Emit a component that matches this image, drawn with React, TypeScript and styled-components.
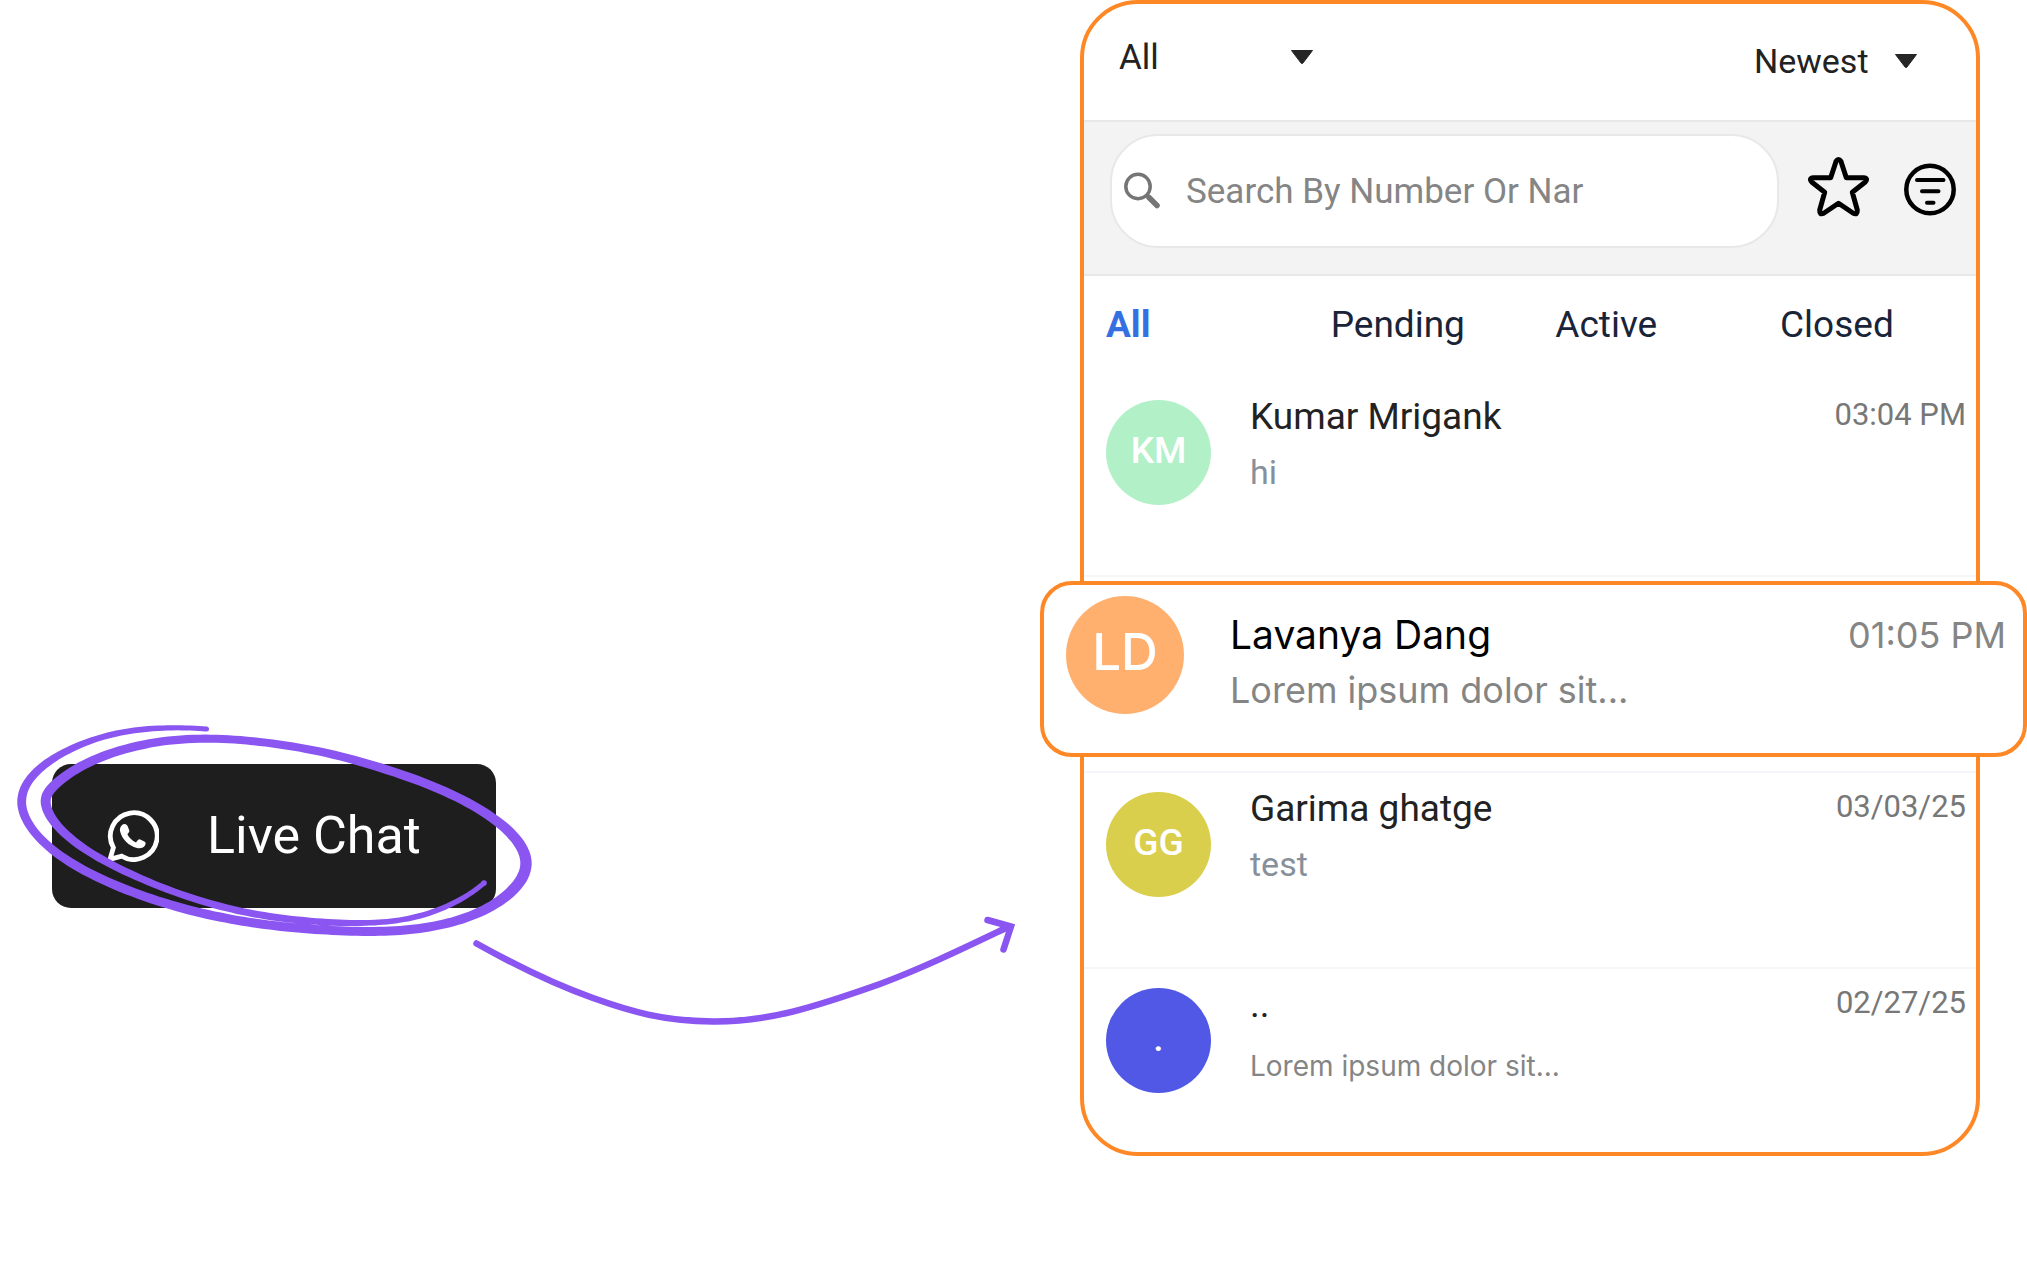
import React, { useState } from "react";
import styled, { createGlobalStyle, css } from "styled-components";

const colors = {
  orange: "#ff8826",
  violet: "#8a55f0",
  ink: "#1e1e1e",
  line: "#e8e8e8",
  muted: "#858585",
};

const roboto = `Roboto, "Liberation Sans", sans-serif`;
const inter = `Inter, "Liberation Sans", sans-serif`;

const GlobalStyle = createGlobalStyle`
  *, *::before, *::after { box-sizing: border-box; }
  body { margin: 0; background: #fff; font-family: ${roboto}; }
  button, input, select { font: inherit; color: inherit; margin: 0; padding: 0; border: 0; background: none; }
  button { cursor: pointer; }
`;

const Page = styled.main`
  display: grid;
  grid-template-columns: minmax(0, 6fr) minmax(0, 5fr);
  align-items: start;
  min-height: 100vh;
  padding-right: 47px;
`;

/* ---------- Left: call to action ---------- */

const Callout = styled.section`
  position: relative;
  padding: 764px 0 0 52px;
`;

const LiveChatButton = styled.button`
  display: flex;
  align-items: center;
  gap: 48px;
  width: 444px;
  height: 144px;
  padding: 0 55px;
  border-radius: 19px;
  background: ${colors.ink};
  color: #fff;
  font-size: 52px;
  line-height: 62px;
  white-space: nowrap;
`;

const Annotation = styled.svg`
  position: absolute;
  top: 0;
  left: 0;
  overflow: visible;
  pointer-events: none;
`;

/* ---------- Right: chat panel ---------- */

const Panel = styled.section`
  border: 4px solid ${colors.orange};
  border-radius: 58px;
  background: #fff;
`;

const Toolbar = styled.div`
  display: flex;
  justify-content: space-between;
  align-items: flex-start;
  height: 116px;
  padding: 0 58px 0 35px;
`;

const Picker = styled.label<{ $width: number; $height: number; $size: number }>`
  display: grid;
  align-items: center;
  width: ${(p) => p.$width}px;
  height: ${(p) => p.$height}px;
  font-size: ${(p) => p.$size}px;
  color: #222;

  & > * {
    grid-area: 1 / 1;
  }
  select {
    appearance: none;
    width: 100%;
    height: 100%;
    outline: none;
  }
  svg {
    justify-self: end;
    pointer-events: none;
  }
`;

const SearchBar = styled.div`
  display: flex;
  align-items: center;
  gap: 22px;
  padding: 12px 9px 26px 26px;
  border-top: 2px solid ${colors.line};
  border-bottom: 2px solid ${colors.line};
  background: #f3f3f3;
`;

const SearchField = styled.label`
  display: flex;
  flex: 1;
  align-items: center;
  gap: 26px;
  min-width: 0;
  height: 114px;
  padding: 0 12px;
  border: 2px solid ${colors.line};
  border-radius: 48px;
  background: #fff;

  svg {
    flex: none;
  }
  input {
    flex: 1;
    min-width: 0;
    height: 100%;
    outline: none;
    font-size: 35px;
    color: #222;
  }
  input::placeholder {
    color: ${colors.muted};
    opacity: 1;
  }
`;

const IconButton = styled.button`
  flex: none;
  width: 72px;
  height: 72px;

  svg {
    display: block;
  }
`;

const Tabs = styled.div`
  display: grid;
  grid-template-columns: repeat(3, minmax(0, 1fr)) 196px;
  height: 96px;
  padding-left: 22px;
`;

const Tab = styled.button<{ $active: boolean }>`
  text-align: left;
  font-size: 37px;
  font-weight: ${(p) => (p.$active ? 700 : 400)};
  color: ${(p) => (p.$active ? "#3570e3" : "#1a2438")};
`;

const ChatList = styled.ul`
  margin: 0;
  padding: 9px 0 0;
  list-style: none;
`;

const ChatItem = styled.li`
  height: 196px;
  border-bottom: 2px solid #f5f6fa;

  &:last-child {
    height: 183px;
    border-bottom: 0;
  }
`;

const Avatar = styled.span<{ $color: string }>`
  display: flex;
  flex: none;
  align-items: center;
  justify-content: center;
  width: 105px;
  height: 105px;
  padding-bottom: 4px;
  border-radius: 50%;
  background: ${(p) => p.$color};
  color: #fff;
  font-size: 37px;
  font-weight: 500;
`;

const Summary = styled.div`
  flex: 1;
  min-width: 0;
`;

const Name = styled.h2`
  margin: 0;
  font-size: 37px;
  font-weight: 400;
  line-height: 34px;
  color: #222;
`;

const Preview = styled.p<{ $light?: boolean }>`
  margin: 18px 0 0;
  font-size: 34px;
  line-height: 40px;
  color: #87909a;
  white-space: nowrap;
  ${(p) =>
    p.$light &&
    css`
      font-family: ${inter};
      font-size: 28px;
      line-height: 52px;
      color: ${colors.muted};
    `}
`;

const Time = styled.time`
  flex: none;
  font-size: 31px;
  line-height: 29px;
  color: #777;
`;

const ChatRow = styled.article<{ $raised?: boolean }>`
  display: flex;
  align-items: flex-start;
  gap: 39px;
  padding: 19px 10px 0 22px;

  ${(p) =>
    p.$raised &&
    css`
      gap: 46px;
      height: 176px;
      margin: 0 -51px 0 -44px;
      padding: 11px 17px 0 22px;
      border: 4px solid ${colors.orange};
      border-radius: 32px;
      background: #fff;
      font-family: ${inter};

      ${Avatar} {
        width: 118px;
        height: 118px;
        padding-bottom: 7px;
        font-size: 51px;
      }
      ${Summary}, ${Time} {
        padding-top: 15px;
      }
      ${Name} {
        font-size: 39px;
        line-height: 48px;
        color: #000;
      }
      ${Preview} {
        margin-top: 7px;
        font-size: 36px;
        line-height: 48px;
        color: ${colors.muted};
      }
      ${Time} {
        font-size: 36px;
        line-height: 48px;
        color: ${colors.muted};
      }
    `}
`;

const RaisedItem = styled(ChatItem)`
  padding-top: 4px;
`;

/* ---------- Drawings ---------- */

type InkPoint = [x: number, y: number, width: number];

const loop: InkPoint[] = [
  [206, 729, 5], [173, 727, 5], [133, 730, 6], [100, 737, 6], [67, 750, 7],
  [40, 767, 8], [25, 785, 8.5], [20.5, 802, 9], [26, 822, 8.5], [47, 847, 8.5],
  [83, 871, 9], [133, 893, 9], [183, 909, 9], [233, 920, 9], [275, 926, 9],
  [320, 930, 9], [370, 932, 9], [410, 930, 9], [448, 924, 9], [485, 911, 9.5],
  [514, 891, 11], [529, 867, 11.5], [521, 844, 11], [499, 821, 9.5],
  [457, 796, 9], [410, 777, 9], [353, 759, 8.5], [300, 747, 8], [245, 740, 8],
  [200, 738, 8], [150, 742, 8.5], [100, 756, 9], [67, 774, 9.5], [48, 791, 10],
  [44.5, 803, 10], [53, 823, 9], [80, 847, 8], [117, 868, 7.5], [167, 890, 7],
  [217, 906, 7], [258, 915, 7], [303, 921, 7], [353, 923.5, 6], [387, 922, 5.5],
  [420, 917, 5.5], [453, 904, 5.5], [473, 892, 5], [484, 883, 5],
];

const spline = (a: number, b: number, c: number, d: number, t: number) =>
  0.5 *
  (2 * b + (c - a) * t + (2 * a - 5 * b + 4 * c - d) * t * t + (3 * b - a - 3 * c + d) * t * t * t);

/** Averages each point with its neighbours, so that the stroke bends evenly. */
function soften(points: InkPoint[], reach: number): InkPoint[] {
  return points.map((_, i) => {
    const r = Math.min(reach, i, points.length - 1 - i);
    const near = points.slice(i - r, i + r + 1);
    return [0, 1, 2].map((k) => near.reduce((sum, p) => sum + p[k], 0) / near.length) as InkPoint;
  });
}

/** Builds the outline of a pen stroke whose width changes along its way. */
function inkOutline(points: InkPoint[]) {
  const sampled: InkPoint[] = [];
  for (let i = 0; i < points.length - 1; i++) {
    const p = [points[Math.max(i - 1, 0)], points[i], points[i + 1], points[Math.min(i + 2, points.length - 1)]];
    for (let s = 0; s < 8; s++) {
      sampled.push([0, 1, 2].map((k) => spline(p[0][k], p[1][k], p[2][k], p[3][k], s / 8)) as InkPoint);
    }
  }
  sampled.push(points[points.length - 1]);
  const path = soften(soften(sampled, 5), 4);
  const left: string[] = [];
  const right: string[] = [];
  path.forEach(([x, y, w], i) => {
    const a = path[Math.max(i - 1, 0)];
    const b = path[Math.min(i + 1, path.length - 1)];
    const len = Math.hypot(b[0] - a[0], b[1] - a[1]) || 1;
    const nx = ((b[1] - a[1]) / len) * (w / 2);
    const ny = (-(b[0] - a[0]) / len) * (w / 2);
    left.push(`${(x + nx).toFixed(1)} ${(y + ny).toFixed(1)}`);
    right.unshift(`${(x - nx).toFixed(1)} ${(y - ny).toFixed(1)}`);
  });
  return `M${left.join("L")}L${right.join("L")}Z`;
}

const Scribble = () => (
  <Annotation width="1030" height="1040" viewBox="0 0 1030 1040" aria-hidden="true">
    <path d={inkOutline(loop)} fill={colors.violet} />
    <circle cx="206.5" cy="729" r="2.5" fill={colors.violet} />
    <circle cx="484" cy="883" r="2.8" fill={colors.violet} />
    <g fill="none" stroke={colors.violet} strokeWidth="6.5" strokeLinecap="round">
      <path d="M476.5 943.5C515 965 553 984 593 998C632 1012 664 1021 713 1021.5C768 1022 815 1007 880 984C925 967 962 949 1006 928" />
      <path d="M987.5 920L1011 926.5L1003.5 949.5" />
    </g>
  </Annotation>
);

const WhatsAppIcon = () => (
  <svg width="52" height="52" viewBox="0 0 52 52" aria-hidden="true">
    <path
      d="M3 49.3L6.4 37.6A23.4 23.4 0 1 1 14.8 46.2Z"
      fill="none"
      stroke="#fff"
      strokeWidth="4.8"
      strokeLinejoin="miter"
    />
    <path
      d="M16.4 14.2C18.4 13.4 20 14.6 20.8 16.6L22.2 20.2C22.6 21.4 22 22.4 20.4 24.2C22.4 28 25 30.6 29 32.4C30.8 30.2 31.8 29 33.2 29.4L37.4 31.4C39 32.2 38.8 33.4 38.2 35C37 37.8 33.4 38.8 30 38C21.4 35.6 15.6 30 13.2 21.8C12.4 18.8 13.6 15.4 16.4 14.2Z"
      fill="#fff"
    />
  </svg>
);

const Caret = () => (
  <svg width="24" height="14" viewBox="0 0 24 14" aria-hidden="true">
    <path d="M1.5 0.5H22.5L13 13Q12 14 11 13Z" fill="#262626" stroke="#262626" strokeLinejoin="round" />
  </svg>
);

const SearchIcon = () => (
  <svg width="36" height="38" viewBox="0 0 36 38" fill="none" stroke="#757575" aria-hidden="true">
    <circle cx="14" cy="14.5" r="12.2" strokeWidth="3.5" />
    <path d="M25 25.5L33 33.5" strokeWidth="5.5" strokeLinecap="round" />
    <path d="M22 22.5L27 27.5" strokeWidth="4" />
  </svg>
);

const StarIcon = () => (
  <svg width="72" height="72" viewBox="0 0 72 72" aria-hidden="true">
    <path
      d="M35 6.4Q37.5 2.6 40 6.4L45.3 22.8H62.5Q67.5 23.2 64.3 27L51.3 37.2L56.3 55Q56.6 60.3 52.3 58.3L37.5 48.2L22.7 58.3Q18.4 60.3 18.7 55L23.7 37.2L10.7 27Q7.5 23.2 12.5 22.8H29.7Z"
      fill="none"
      stroke="#000"
      strokeWidth="5"
      strokeLinejoin="round"
    />
  </svg>
);

const FilterIcon = () => (
  <svg width="72" height="72" viewBox="0 0 72 72" fill="none" stroke="#000" strokeLinecap="round" aria-hidden="true">
    <circle cx="35" cy="34.5" r="23.7" strokeWidth="4.5" />
    <path d="M22 25H48.5M27 36.3H43.5M32 47.7H38.5" strokeWidth="4" />
  </svg>
);

/* ---------- Content ---------- */

type Chat = {
  initials: string;
  color: string;
  name: string;
  preview: string;
  time: string;
  raised?: boolean;
  light?: boolean;
};

const chats: Chat[] = [
  { initials: "KM", color: "#b2f0c8", name: "Kumar Mrigank", preview: "hi", time: "03:04 PM" },
  { initials: "LD", color: "#ffb06f", name: "Lavanya Dang", preview: "Lorem ipsum dolor sit...", time: "01:05 PM", raised: true },
  { initials: "GG", color: "#dace4d", name: "Garima ghatge", preview: "test", time: "03/03/25" },
  { initials: ".", color: "#5058e5", name: "..", preview: "Lorem ipsum dolor sit...", time: "02/27/25", light: true },
];

const tabs = ["All", "Pending", "Active", "Closed"];

export default function App() {
  const [activeTab, setActiveTab] = useState("All");

  return (
    <>
      <GlobalStyle />
      <Page>
        <Callout>
          <LiveChatButton type="button">
            <WhatsAppIcon />
            Live Chat
          </LiveChatButton>
          <Scribble />
        </Callout>

        <Panel>
          <Toolbar>
            <Picker $width={195} $height={106} $size={35}>
              <select aria-label="Chats shown" defaultValue="All">
                <option>All</option>
              </select>
              <Caret />
            </Picker>
            <Picker $width={164} $height={114} $size={34}>
              <select aria-label="Sort order" defaultValue="Newest">
                <option>Newest</option>
              </select>
              <Caret />
            </Picker>
          </Toolbar>

          <SearchBar>
            <SearchField>
              <SearchIcon />
              <input type="text" aria-label="Search chats" placeholder="Search By Number Or Nar" />
            </SearchField>
            <IconButton type="button" aria-label="Starred chats">
              <StarIcon />
            </IconButton>
            <IconButton type="button" aria-label="Filter chats">
              <FilterIcon />
            </IconButton>
          </SearchBar>

          <Tabs role="tablist">
            {tabs.map((tab) => (
              <Tab
                key={tab}
                type="button"
                role="tab"
                aria-selected={tab === activeTab}
                $active={tab === activeTab}
                onClick={() => setActiveTab(tab)}
              >
                {tab}
              </Tab>
            ))}
          </Tabs>

          <ChatList>
            {chats.map((chat) => {
              const Item = chat.raised ? RaisedItem : ChatItem;
              return (
                <Item key={chat.initials}>
                  <ChatRow $raised={chat.raised}>
                    <Avatar $color={chat.color}>{chat.initials}</Avatar>
                    <Summary>
                      <Name>{chat.name}</Name>
                      <Preview $light={chat.light}>{chat.preview}</Preview>
                    </Summary>
                    <Time>{chat.time}</Time>
                  </ChatRow>
                </Item>
              );
            })}
          </ChatList>
        </Panel>
      </Page>
    </>
  );
}
